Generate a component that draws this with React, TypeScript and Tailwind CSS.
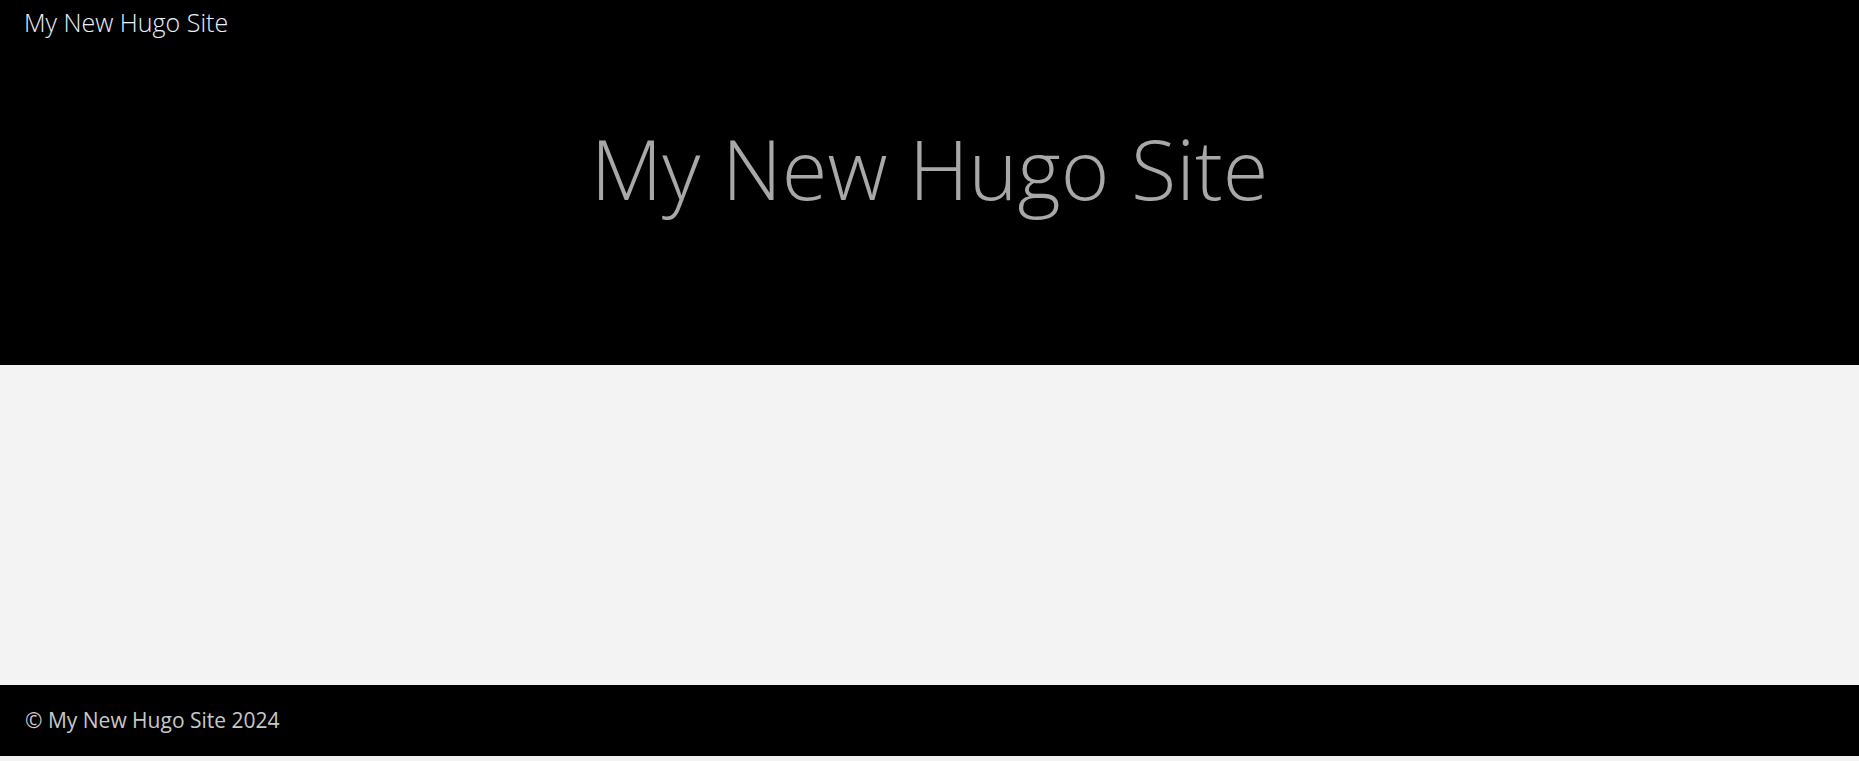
export default function App() {
  return (
    <div className="min-h-[761px] bg-[#f3f3f3] font-['Open_Sans',sans-serif]">
      {/* Header */}
      <header className="h-[365px] bg-black">
        <div className="px-[24px] pt-[4px] text-[25px] font-light leading-[36px] text-[#e8f0ff]">
          My New Hugo Site
        </div>
        <h1 className="mt-[80px] text-center text-[83px] font-light leading-[96px] text-[#a8a8a8]">
          My New Hugo Site
        </h1>
      </header>

      {/* Main */}
      <main className="h-[320px]" />

      {/* Footer */}
      <footer className="flex h-[71px] items-center bg-black px-[25px]">
        <p className="text-[21px] text-[#c8c8c8]">© My New Hugo Site 2024</p>
      </footer>
    </div>
  );
}
